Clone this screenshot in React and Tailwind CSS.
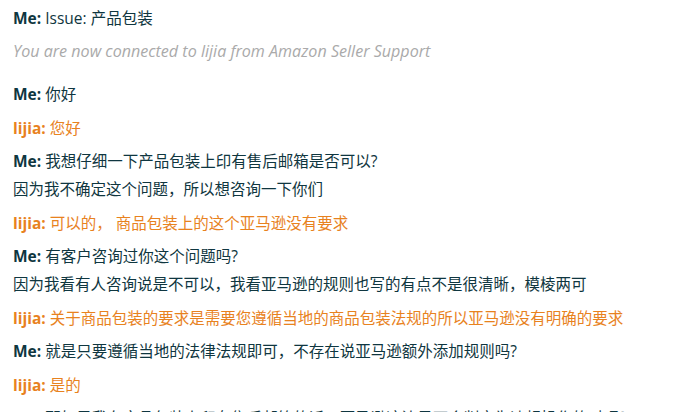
const messages = [
  { from: "Me", text: "你好" },
  { from: "lijia", text: "您好" },
  { from: "Me", text: "我想仔细一下产品包装上印有售后邮箱是否可以?\n因为我不确定这个问题，所以想咨询一下你们" },
  { from: "lijia", text: "可以的， 商品包装上的这个亚马逊没有要求" },
  { from: "Me", text: "有客户咨询过你这个问题吗?\n因为我看有人咨询说是不可以，我看亚马逊的规则也写的有点不是很清晰，模棱两可" },
  { from: "lijia", text: "关于商品包装的要求是需要您遵循当地的商品包装法规的所以亚马逊没有明确的要求" },
  { from: "Me", text: "就是只要遵循当地的法律法规即可，不存在说亚马逊额外添加规则吗?" },
  { from: "lijia", text: "是的" },
  { from: "Me", text: "那如果我在产品包装上印有售后邮箱的话，亚马逊这边是不会判定为违规操作的对吧？" },
];

function Message({ from, text }) {
  const isMe = from === "Me";
  return (
    <div className={`whitespace-pre-line leading-[28px] ${isMe ? "text-[#0f3640]" : "text-[#e8821e]"}`}>
      <span className="font-bold">{from}:</span> {text}
    </div>
  );
}

export default function App() {
  return (
    <div
      className="w-[690px] h-[412px] overflow-hidden bg-white pl-[13px] pt-[4px] text-[15.5px]"
      style={{ fontFamily: '"Open Sans", "Noto Sans CJK SC", sans-serif' }}
    >
      <div className="leading-[28px] text-[#0f3640]">
        <span className="font-bold">Me:</span> Issue: 产品包装
      </div>
      <div className="mt-[5px] leading-[28px] italic text-[16.1px] text-[#aaaaaa]">
        You are now connected to lijia from Amazon Seller Support
      </div>
      <div className="mt-[15px] flex flex-col gap-[5.5px]">
        {messages.map((m, i) => (
          <Message key={i} from={m.from} text={m.text} />
        ))}
      </div>
    </div>
  );
}
